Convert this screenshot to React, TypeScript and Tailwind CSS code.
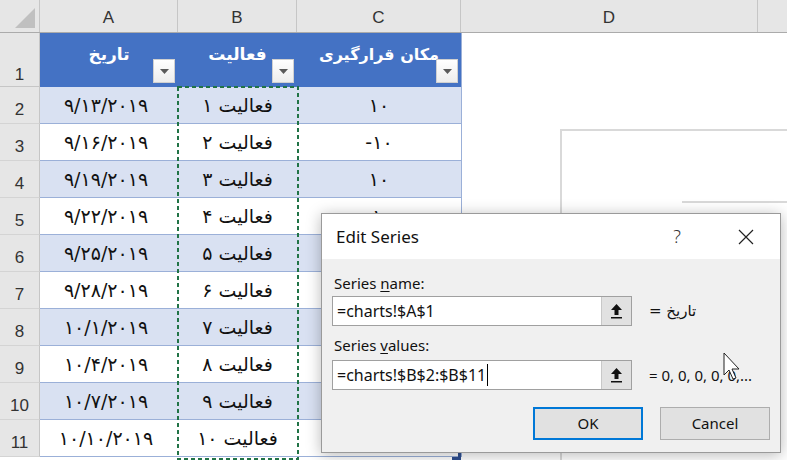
import React from 'react'

const rows = [
  { date: '۹/۱۳/۲۰۱۹', act: 'فعالیت ۱', pos: '۱۰' },
  { date: '۹/۱۶/۲۰۱۹', act: 'فعالیت ۲', pos: '-۱۰' },
  { date: '۹/۱۹/۲۰۱۹', act: 'فعالیت ۳', pos: '۱۰' },
  { date: '۹/۲۲/۲۰۱۹', act: 'فعالیت ۴', pos: '-۱۰' },
  { date: '۹/۲۵/۲۰۱۹', act: 'فعالیت ۵', pos: '۱۰' },
  { date: '۹/۲۸/۲۰۱۹', act: 'فعالیت ۶', pos: '-۱۰' },
  { date: '۱۰/۱/۲۰۱۹', act: 'فعالیت ۷', pos: '۱۰' },
  { date: '۱۰/۴/۲۰۱۹', act: 'فعالیت ۸', pos: '-۱۰' },
  { date: '۱۰/۷/۲۰۱۹', act: 'فعالیت ۹', pos: '۱۰' },
  { date: '۱۰/۱۰/۲۰۱۹', act: 'فعالیت ۱۰', pos: '-۱۰' },
]

const faFont = 'font-["DejaVu_Sans",sans-serif]'

function FilterButton() {
  return (
    <div className="absolute right-[3px] bottom-[4px] flex h-[24px] w-[22px] items-center justify-center border border-[#d0d0d0] bg-gradient-to-b from-white to-[#ededed]">
      <svg width="9" height="5" viewBox="0 0 9 5">
        <path d="M0 0 L9 0 L4.5 5 Z" fill="#5a5a5a" />
      </svg>
    </div>
  )
}

function HeaderCell({ label, width, size }: { label: string; width: string; size: string }) {
  return (
    <div className={`relative flex items-center justify-center pb-[10px] font-bold text-white ${faFont} ${size} ${width}`} dir="rtl">
      {label}
      <FilterButton />
    </div>
  )
}

function UploadIcon() {
  return (
    <svg width="13" height="16" viewBox="0 0 13 16">
      <path d="M6.5 1 L12 7 L8.5 7 L8.5 12 L4.5 12 L4.5 7 L1 7 Z" fill="#111" />
      <rect x="1" y="14" width="11" height="1.5" fill="#111" />
    </svg>
  )
}

function RefInput({ value, caret }: { value: string; caret?: boolean }) {
  return (
    <div className="flex h-[30px] w-[300px] border border-[#a0a0a0] bg-white">
      <div className="flex flex-1 items-center pl-[4px] text-[16px] text-[#111]">
        {value}
        {caret && <span className="ml-[1px] h-[22px] w-[1px] bg-black" />}
      </div>
      <div className="flex w-[30px] items-center justify-center border-l border-[#c8c8c8] bg-[#e1e1e1]">
        <UploadIcon />
      </div>
    </div>
  )
}

function EditSeriesDialog() {
  return (
    <div className='absolute left-[321px] top-[213px] flex h-[240px] w-[460px] flex-col border border-[#9a9a9a] bg-[#f0f0f0] font-["Noto_Sans",sans-serif] shadow-[0_2px_14px_rgba(0,0,0,0.28)]'>
      {/* title bar */}
      <div className="flex h-[45px] items-center bg-white pl-[14px] pr-[26px] text-[17px] text-[#111]">
        <span className="flex-1">Edit Series</span>
        <span className="mr-[57px] text-[18px] font-light text-[#333]">?</span>
        <svg width="16" height="16" viewBox="0 0 16 16">
          <path d="M1 1 L15 15 M15 1 L1 15" stroke="#222" strokeWidth="1.2" />
        </svg>
      </div>

      <div className="flex flex-1 flex-col px-[10px] pt-[14px] text-[15px] text-[#111]">
        <div className="pl-[2px] leading-[20px]">
          Series <span className="underline underline-offset-2">n</span>ame:
        </div>
        <div className="mt-[3px] flex items-center">
          <RefInput value="=charts!$A$1" />
          <span className={`ml-[17px] text-[15px] ${faFont}`}>= تاریخ</span>
        </div>

        <div className="mt-[9px] pl-[2px] leading-[20px]">
          Series <span className="underline underline-offset-2">v</span>alues:
        </div>
        <div className="mt-[5px] flex items-center">
          <RefInput value="=charts!$B$2:$B$11" caret />
          <span className="ml-[17px] text-[15px]">= 0, 0, 0, 0, 0,...</span>
        </div>

        <div className="mt-[17px] flex justify-end gap-[17px]">
          <button className="h-[33px] w-[110px] border-2 border-[#0078d7] bg-[#e1e1e1] text-[15px] text-[#111]">OK</button>
          <button className="h-[33px] w-[110px] border border-[#adadad] bg-[#e1e1e1] text-[15px] text-[#111]">Cancel</button>
        </div>
      </div>
    </div>
  )
}

export default function App() {
  return (
    <div className='relative h-[460px] w-[787px] overflow-hidden bg-white font-["Liberation_Sans",sans-serif]'>
      {/* column headers */}
      <div className="flex h-[33px] border-b border-[#ababab] bg-[#e6e6e6] text-[17px] text-[#333]">
        <div className="flex w-[40px] items-end justify-end border-r border-[#c6c6c6] pb-[4px] pr-[4px]">
          <svg width="20" height="20" viewBox="0 0 20 20">
            <path d="M20 0 L20 20 L0 20 Z" fill="#c0c0c0" />
          </svg>
        </div>
        <div className="flex w-[138px] items-center justify-center border-r border-[#c6c6c6] pt-[4px]">A</div>
        <div className="flex w-[119px] items-center justify-center border-r border-[#c6c6c6] pt-[4px]">B</div>
        <div className="flex w-[164px] items-center justify-center border-r border-[#c6c6c6] pt-[4px]">C</div>
        <div className="flex w-[297px] items-center justify-center border-r border-[#c6c6c6] pt-[4px]">D</div>
        <div className="flex-1" />
      </div>

      {/* row 1: table header */}
      <div className="flex h-[54px]">
        <div className="flex w-[40px] items-end justify-center border-r border-b border-[#c6c6c6] bg-[#e6e6e6] pb-0 text-[17px] leading-[22px] text-[#333]">1</div>
        <div className="flex bg-[#4472c4]">
          <HeaderCell label="تاریخ" width="w-[138px]" size="text-[17px]" />
          <HeaderCell label="فعالیت" width="w-[119px]" size="text-[17px]" />
          <HeaderCell label="مکان قرارگیری" width="w-[164px]" size="text-[16px]" />
        </div>
        <div className="flex-1 border-l border-[#9bb0d8]" />
      </div>

      {/* data rows */}
      {rows.map((r, i) => (
        <div key={i} className="flex h-[37px]">
          <div className="flex w-[40px] items-center justify-center border-r border-b border-[#d4d4d4] border-r-[#c6c6c6] bg-[#e6e6e6] pt-[10px] text-[17px] text-[#333]">
            {i + 2}
          </div>
          <div className={`flex border-b border-[#9bb0d8] text-[19px] text-[#111] ${faFont} ${i % 2 === 0 ? 'bg-[#d9e1f2]' : 'bg-white'}`}>
            <div className="flex w-[138px] items-center justify-center pr-[6px]">{r.date}</div>
            <div className="flex w-[119px] items-center justify-center" dir="rtl">{r.act}</div>
            <div className="flex w-[164px] items-center justify-center">{r.pos}</div>
          </div>
          <div className="flex-1 border-l border-[#9bb0d8]" />
        </div>
      ))}

      {/* copy marquee around B2:B11 */}
      <svg className="absolute left-[177px] top-[86px]" width="122" height="376">
        <rect x="1" y="1" width="120" height="372" fill="none" stroke="#217346" strokeWidth="2" strokeDasharray="4 3" />
      </svg>

      {/* table resize handle */}
      <svg className="absolute left-[452px] top-[449px]" width="9" height="11" viewBox="0 0 9 11">
        <path d="M6 0 L9 0 L9 11 L0 11 L0 8 L6 8 Z" fill="#2f4f8f" />
      </svg>

      {/* chart frame behind dialog */}
      <div className="absolute left-[560px] top-[129px] h-[340px] w-[240px] border-l-2 border-t-2 border-[#d9d9d9]" />
      <div className="absolute left-[682px] top-[201px] h-[2px] w-[110px] bg-[#d9d9d9]" />

      <EditSeriesDialog />

      {/* mouse pointer */}
      <svg className="absolute left-[723px] top-[352px]" width="20" height="30" viewBox="0 0 20 30">
        <path d="M1 1 L1 23 L6 18 L10 27 L13 26 L9 17 L16 17 Z" fill="white" stroke="#222" strokeWidth="1" strokeLinejoin="round" />
      </svg>
    </div>
  )
}
